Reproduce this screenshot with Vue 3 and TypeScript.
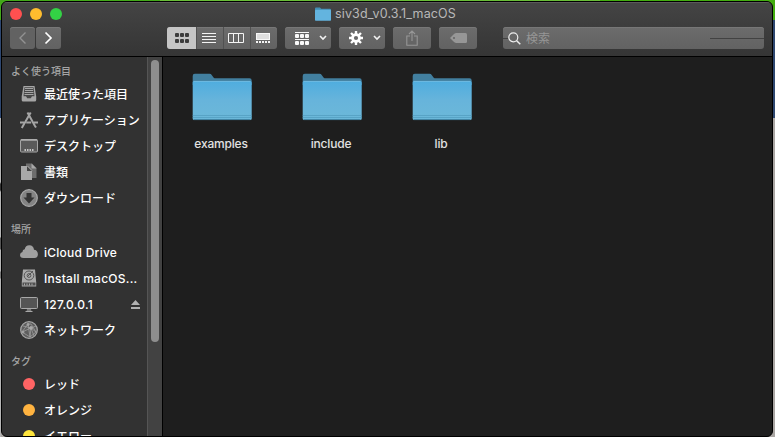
<script setup lang="ts">
interface SidebarItem {
  label: string
  icon?: string
  color?: string
  eject?: boolean
  latin?: boolean
}
interface SidebarSection {
  title: string
  key: string
  items: SidebarItem[]
}

const sections: SidebarSection[] = [
  {
    title: 'よく使う項目',
    key: 'favorites',
    items: [
      { label: '最近使った項目', icon: 'recents' },
      { label: 'アプリケーション', icon: 'apps' },
      { label: 'デスクトップ', icon: 'desktop' },
      { label: '書類', icon: 'documents' },
      { label: 'ダウンロード', icon: 'downloads' },
    ],
  },
  {
    title: '場所',
    key: 'locations',
    items: [
      { label: 'iCloud Drive', icon: 'cloud', latin: true },
      { label: 'Install macOS...', icon: 'disk', latin: true },
      { label: '127.0.0.1', icon: 'display', latin: true, eject: true },
      { label: 'ネットワーク', icon: 'network' },
    ],
  },
  {
    title: 'タグ',
    key: 'tags',
    items: [
      { label: 'レッド', color: '#ff6464' },
      { label: 'オレンジ', color: '#ffb340' },
      { label: 'イエロー', color: '#ffe53c' },
    ],
  },
]

const folders: string[] = ['examples', 'include', 'lib']
const dots: number[] = [0, 5, 10]
</script>

<template>
  <div class="desktop">
    <div class="backdrop"><i class="lawn"></i><i class="sea"></i><i class="page"></i></div>
    <main class="window">
      <header class="titlebar">
        <div class="title-row">
          <div class="lights"><i class="close"></i><i class="minimize"></i><i class="zoom"></i></div>
          <div class="title">
            <svg width="16" height="14" viewBox="0 0 16 14">
              <path d="M0 1.5Q0 .5 1 .5h4l1.2 1.2H15q1 0 1 1V5H0z" fill="#438fb3" />
              <rect y="2.8" width="16" height="11" rx=".7" fill="#63b4df" />
            </svg>
            <span>siv3d_v0.3.1_macOS</span>
          </div>
        </div>
        <div class="toolbar">
          <div class="button nav back">
            <svg width="25" height="22" viewBox="0 0 25 22"><path d="M15.5 5.5 10 11l5.5 5.5" fill="none" stroke="#929292" stroke-width="1.4" /></svg>
          </div>
          <div class="button nav forward">
            <svg width="25" height="22" viewBox="0 0 25 22"><path d="M9.5 5.5 15 11l-5.5 5.5" fill="none" stroke="#fff" stroke-width="1.7" /></svg>
          </div>
          <div class="button views">
            <div class="seg active">
              <svg width="14" height="10" viewBox="0 0 14 10">
                <g fill="#3c3c3c">
                  <rect v-for="d in dots" :key="d" :x="d" y="0" width="4" height="4" rx="1" />
                  <rect v-for="d in dots" :key="'b' + d" :x="d" y="6" width="4" height="4" rx="1" />
                </g>
              </svg>
            </div>
            <div class="seg">
              <svg width="14" height="10" viewBox="0 0 14 10"><path d="M0 .5h14M0 3.5h14M0 6.5h14M0 9.5h14" stroke="#f4f4f4" /></svg>
            </div>
            <div class="seg">
              <svg width="16" height="10" viewBox="0 0 16 10"><path d="M.5.5h15v9H.5zM5.5.5v9M10.5.5v9" fill="none" stroke="#f4f4f4" /></svg>
            </div>
            <div class="seg last">
              <svg width="14" height="10" viewBox="0 0 14 10">
                <rect x=".5" y=".5" width="13" height="6" fill="#dedede" stroke="#f7f7f7" />
                <path d="M0 9h14" stroke="#f4f4f4" stroke-width="2" stroke-dasharray="2 1" />
              </svg>
            </div>
          </div>
          <div class="button menu">
            <svg width="14" height="13" viewBox="0 0 14 13">
              <path d="M0 .5h14M0 7.5h14" stroke="#fafafa" />
              <g fill="#fafafa">
                <rect v-for="d in dots" :key="d" :x="d" y="2" width="4" height="4" rx="1" />
                <rect v-for="d in dots" :key="'b' + d" :x="d" y="9" width="4" height="4" rx="1" />
              </g>
            </svg>
            <svg width="8" height="6" viewBox="0 0 8 6"><path d="m1 1 3 3 3-3" fill="none" stroke="#f2f2f2" stroke-width="1.6" /></svg>
          </div>
          <div class="button menu gear">
            <svg width="14" height="14" viewBox="0 0 14 14">
              <path d="M7 0v14M0 7h14M2 2l10 10M12 2 2 12" stroke="#fff" stroke-width="2.4" />
              <circle cx="7" cy="7" r="3.5" fill="none" stroke="#fff" stroke-width="2.7" />
              <circle cx="7" cy="7" r="2.1" fill="#696969" />
            </svg>
            <svg width="8" height="6" viewBox="0 0 8 6"><path d="m1 1 3 3 3-3" fill="none" stroke="#f2f2f2" stroke-width="1.6" /></svg>
          </div>
          <div class="button action">
            <svg width="12" height="16" viewBox="0 0 12 16"><path d="M4 6H.8v9.2h10.400V6H8M6 11V1M3 4l3-3 3 3" fill="none" stroke="#969696" stroke-width="1.1" /></svg>
          </div>
          <div class="button action">
            <svg width="17" height="10" viewBox="0 0 17 10">
              <path d="M0 5 4 1Q5 0 6.5 0H15.5Q17 0 17 1.5v7Q17 10 15.5 10H6.5Q5 10 4 9z" fill="#969696" />
              <circle cx="4" cy="5" r="1" fill="#626262" />
            </svg>
          </div>
          <div class="button search">
            <svg width="13" height="13" viewBox="0 0 13 13"><circle cx="5.3" cy="5.3" r="4.5" fill="none" stroke="#ececec" stroke-width="1.2" /><path d="m8.7 8.7 3.6 3.6" stroke="#ececec" stroke-width="1.5" /></svg>
            <span>検索</span>
            <i class="rule start"></i>
            <i class="rule end"></i>
          </div>
        </div>
      </header>

      <div class="body">
        <aside class="sidebar">
          <section v-for="section in sections" :key="section.key" :class="section.key">
            <h2>{{ section.title }}</h2>
            <ul>
              <li v-for="item in section.items" :key="item.label">
                <span class="icon">
                  <i v-if="item.color" class="tag" :style="{ background: item.color }"></i>
                  <svg v-else width="20" height="20" viewBox="0 0 20 20">
                    <g v-if="item.icon === 'recents'">
                      <path d="M4.5 2h11l1.7 10.5v3.500q0 1.5-1.5 1.5H4.200q-1.5 0-1.5-1.500v-3.500z" fill="#a5a5a5" />
                      <path d="M5.500 3.200h9l1 9H13l-1.200 2H8.200l-1.200-2H4.500z" fill="#474747" />
                      <path d="M6 4.500h8M6 6.500h8M5.500 8.500h9M5.500 10.500h9" stroke="#a5a5a5" />
                    </g>
                    <g v-else-if="item.icon === 'apps'" fill="none" stroke="#a5a5a5">
                      <path d="M8.500 2.500 15.700 15.500l1.300 2M11.700 2.500 4.200 15.500l-1.400 2.500" stroke-width="2" />
                      <path d="M1 12.500h4M7.200 12.500h5M15 12.500h4" stroke-width="2" />
                    </g>
                    <g v-else-if="item.icon === 'desktop'">
                      <rect x="1.500" y="3.500" width="17" height="12.500" rx="1" fill="#5a5a5a" stroke="#a5a5a5" />
                      <path d="M2 4h16" stroke="#b0b0b0" stroke-width="1.500" />
                      <path d="M5.500 14h9.500" stroke="#c5c5c5" stroke-width="2" stroke-dasharray="1.500 1" />
                    </g>
                    <g v-else-if="item.icon === 'documents'">
                      <path d="M7 1.500h6l4.500 4.500v10H7z" fill="#6d6d6d" />
                      <path d="M12.500 1.500v5h5z" fill="#a8a8a8" />
                      <path d="M2 4h6l5 5v9H2z" fill="#a8a8a8" />
                      <path d="M8 4v5h5z" fill="#444" /><path d="m8.500 4 4.500 4.500" stroke="#a8a8a8" />
                    </g>
                    <g v-else-if="item.icon === 'downloads'">
                      <circle cx="10" cy="10" r="8.300" fill="#848484" stroke="#aaa" stroke-width="1.200" />
                      <path d="M7.500 5h5v4.500h3L10 15.500 4.500 9.500h3z" fill="#333" />
                    </g>
                    <path v-else-if="item.icon === 'cloud'" d="M4.500 16Q1 16 1 13q0-2.500 2.500-3-.2-2.500 2.200-2.700.8-4 4.500-4.100 4.300-.1 4.800 4.600 3.500.3 3.900 4.100Q19 16 15.500 16z" fill="#a0a0a0" />
                    <g v-else-if="item.icon === 'disk'">
                      <path d="M4 1.500h12l1.200 12.500v4.500H2.800V14z" fill="#aaa" />
                      <path d="M3.500 14.500h13v3h-13z" fill="#505050" /><path d="M5 16.500h10" stroke="#aaa" stroke-width="2" stroke-dasharray="1 1.500" />
                      <ellipse cx="10" cy="7.500" rx="4.800" ry="4.500" fill="none" stroke="#555" /><circle cx="10" cy="7.500" r="1.900" fill="none" stroke="#555" /><path d="m8 9 6-6" stroke="#555" />
                    </g>
                    <g v-else-if="item.icon === 'display'">
                      <rect x="1.500" y="3.500" width="17" height="11" rx="1" fill="#555" stroke="#a8a8a8" />
                      <path d="M8 15h4l.5 2.500h-5z" fill="#777" /><path d="M6.500 17.500h7" stroke="#a8a8a8" />
                    </g>
                    <g v-else fill="none" stroke="#a5a5a5">
                      <circle cx="10" cy="10" r="8.300" fill="#5e5e5e" stroke-width="1.300" />
                      <path d="m9 4-6 8 9-4 5 4-5-8zM9 4l2 13 1-9 3 8M3 12l8 5 6-5M4 6l8 2 5-2" stroke-width=".7" />
                      <circle cx="9" cy="4.500" r="1" fill="#a5a5a5" /><circle cx="12" cy="8" r="1.400" fill="#b0b0b0" /><circle cx="4" cy="12" r="1" fill="#a5a5a5" />
                    </g>
                  </svg>
                </span>
                <span class="label" :class="{ latin: item.latin }">{{ item.label }}</span>
                <svg v-if="item.eject" class="eject" width="9" height="9" viewBox="0 0 9 9"><path d="M4.500 0 9 5H0zM0 7h9v2H0z" fill="#b2b2b2" /></svg>
              </li>
            </ul>
          </section>
        </aside>
        <div class="scrollbar"><i></i></div>
        <div class="content">
          <figure v-for="name in folders" :key="name">
            <svg width="60" height="48" viewBox="0 0 60 48">
              <defs>
                <linearGradient :id="'face-' + name" x1="0" y1="0" x2="0" y2="1">
                  <stop offset="0" stop-color="#4faddf" /><stop offset=".5" stop-color="#67b4db" /><stop offset="1" stop-color="#6cb8d9" />
                </linearGradient>
              </defs>
              <path d="M.7 3Q.7.800 2.800.800H17.500q1.500 0 2.200 1.100l1.800 2.500Q22.200 5.300 24 5.300H57.500q2.200 0 2.200 2.200V12H.7z" fill="#427f9f" />
              <path d="M.7 9.500Q.7 8 2 8h56q1.700 0 1.700 1.700V45.500q0 1.500-1.500 1.500H2Q.7 47 .7 45.500z" :fill="`url(#face-${name})`" />
              <path d="M1.500 8.400h57" stroke="#76bddf" stroke-width=".8" />
              <path d="M.7 42.500h59M.7 44.500h59" stroke="#509bbd" stroke-width=".7" /><path d="M1.500 46.600h57" stroke="#3e7f9e" />
            </svg>
            <figcaption>{{ name }}</figcaption>
          </figure>
        </div>
      </div>
    </main>
  </div>
</template>

<style>
body { margin: 0; overflow: hidden; }
</style>

<style scoped>
* { box-sizing: border-box; }
svg { display: block; flex: none; }
.desktop {
  position: relative;
  width: 775px;
  height: 437px;
  padding: 1px 1px 0;
  background: #aaa6a3;
  font-family: Inter, "Noto Sans CJK JP", sans-serif;
  overflow: hidden;
}
.backdrop { position: absolute; inset: 0; }
.backdrop i { display: block; }
.lawn { height: 20px; background: linear-gradient(90deg, #43a91a 0 160px, #69bd38 160px 600px, #43ad10 600px); }
.sea { height: 98px; background: #2e4770; }
.page {
  width: 1px;
  height: 319px;
  background: linear-gradient(#b5b5b5 0 64px, #333 66px 72px, #b5b5b5 74px 119px, #555 120px 131px, #b5b5b5 132px 153px, #777 154px 160px, #b5b5b5 161px);
}
.window {
  position: relative;
  width: 772px;
  height: 436px;
  display: flex;
  flex-direction: column;
  border: 1px solid #000;
  border-radius: 6px;
  background: #1e1e1e;
  overflow: hidden;
}
.titlebar {
  height: 55px;
  flex: none;
  background: linear-gradient(#444, #353535);
  border-top: 1px solid #5b5b5b;
  border-bottom: 1px solid #000;
}
.title-row { height: 24px; display: flex; align-items: center; padding-left: 8px; }
.lights { display: flex; gap: 8px; padding-bottom: 3px; width: 305px; }
.lights i { width: 12px; height: 12px; border-radius: 50%; }
.close { background: #ff5050; }
.minimize { background: #ffbd2e; }
.zoom { background: #33d245; }
.title { display: flex; align-items: center; gap: 4px; padding-bottom: 3px; color: #b8b8b8; font-size: 12.5px; line-height: 16px; letter-spacing: 0.14px; }
.toolbar { display: flex; padding-left: 8px; }
.button {
  height: 22px;
  flex: none;
  display: flex;
  align-items: center;
  justify-content: center;
  border-radius: 3px;
  background: linear-gradient(#6c6c6c, #626262);
  box-shadow: inset 0 1px #777;
}
.nav { width: 25px; }
.back { margin-right: 1px; background: #626262; }
.views { width: 110px; margin: 0 8px 0 106px; overflow: hidden; }
.seg { width: 27px; height: 22px; display: flex; align-items: center; justify-content: center; border-left: 1px solid #515151; }
.seg.active { width: 29px; border: 0; background: #c5c5c5; }
.seg:not(.active) { padding-right: 2px; }
.menu { width: 46px; margin-right: 8px; gap: 10px; padding-left: 5px; }
.action { width: 38px; margin-right: 8px; }
.search { position: relative; width: 261px; margin-left: 18px; justify-content: flex-start; gap: 5px; padding-left: 5px; color: #969696; font-size: 12px; }
.search span { padding-bottom: 2px; }
.rule { position: absolute; top: 11px; height: 1px; background: #424242; }
.rule.start { left: 0; width: 5px; }
.rule.end { right: 0; width: 54px; }
.body { flex: 1; display: flex; min-height: 0; }
.sidebar { width: 145px; flex: none; background: #323232; overflow: hidden; }
section { height: 158px; }
.locations { height: 132px; }
h2 { margin: 0; height: 24px; padding: 7px 0 0 9px; color: #a5a5a5; font-size: 10px; font-weight: 500; line-height: 15px; }
ul { list-style: none; margin: 0; padding: 0; }
li { height: 26px; display: flex; align-items: center; padding: 0 7px 0 17px; color: #fff; font-size: 12px; font-weight: 500; white-space: nowrap; }
.icon { width: 20px; display: flex; justify-content: center; margin-right: 5px; }
.label { padding-bottom: 2px; }
.label.latin { padding-bottom: 0; letter-spacing: 0.25px; }
.tag { width: 12px; height: 12px; border-radius: 50%; }
.eject { margin-left: auto; }
.scrollbar { width: 16px; flex: none; padding: 3px 0 0 3px; background: #424242; border-left: 1px solid #555; border-right: 1px solid #000; }
.scrollbar i { display: block; width: 8px; height: 282px; border-radius: 4px; background: #8e8e8e; }
.content { flex: 1; display: flex; padding: 16px 0 0 4px; }
figure { width: 110px; flex: none; margin: 0; display: flex; flex-direction: column; align-items: center; }
figcaption { margin-top: 14px; padding-right: 2px; color: #e2e2e2; font-size: 12px; font-weight: 500; line-height: 18px; letter-spacing: -0.2px; }
</style>
